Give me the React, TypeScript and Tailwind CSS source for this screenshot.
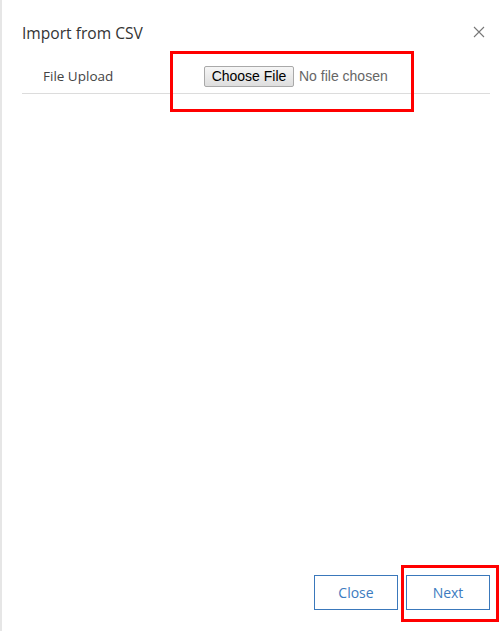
export default function App() {
  const font = { fontFamily: '"Open Sans", "Liberation Sans", sans-serif' };
  return (
    <div className="relative w-[502px] h-[631px] bg-white border-l-2 border-[#e6e6e6] flex flex-col text-[#333]" style={font}>
      {/* header */}
      <div className="flex items-start justify-between pl-5 pr-[17px] pt-[21px]">
        <h1 className="text-[15.6px] leading-6 text-[#333]">Import from CSV</h1>
        <button className="mt-[5px] w-[12px] h-[12px] text-[#777]" aria-label="close">
          <svg viewBox="0 0 12 12" width="12" height="12" stroke="currentColor" strokeWidth="1.1" fill="none">
            <path d="M1 1L11 11M11 1L1 11" />
          </svg>
        </button>
      </div>

      {/* form row */}
      <div className="mx-5 mr-[12px] mt-[18px] flex items-center h-[26px] border-b border-[#dcdcdc] pb-[4px] box-content">
        <div className="w-[182px] pl-[21px] text-[13.5px] text-[#444]">File Upload</div>
        <div className="flex items-center" style={{ fontFamily: '"Liberation Sans", Arial, sans-serif' }}>
          <span className="h-[21px] w-[90px] flex items-center justify-center border border-[#a9a9a9] rounded-[2px] bg-gradient-to-b from-[#f6f6f6] to-[#dedede] text-[14px] text-black">
            Choose File
          </span>
          <span className="ml-[5px] text-[14px] text-[#666]">No file chosen</span>
        </div>
      </div>

      <div className="flex-1" />

      {/* footer */}
      <div className="flex justify-end gap-2 pr-[12px] pb-[21px]">
        <button className="w-[84px] h-[35px] border border-[#3a78bb] text-[#3c7bc0] text-[14px]">Close</button>
        <button className="w-[84px] h-[35px] border border-[#3a78bb] text-[#3c7bc0] text-[14px]">Next</button>
      </div>

      {/* annotation boxes */}
      <div className="absolute left-[168px] top-[51px] w-[244px] h-[61px] border-[3px] border-[#ff0000]" />
      <div className="absolute left-[399px] top-[565px] w-[98px] h-[57px] border-[3px] border-[#ff0000]" />
    </div>
  );
}
